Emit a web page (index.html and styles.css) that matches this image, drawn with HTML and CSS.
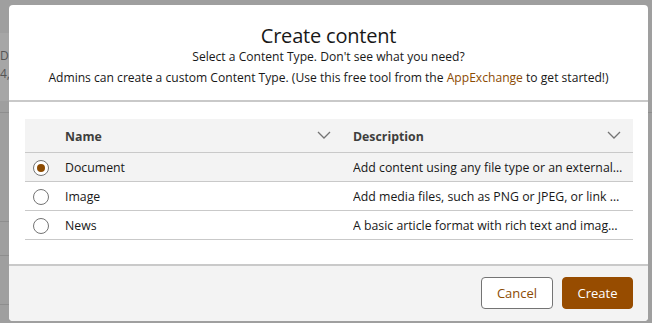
FILE: index.html
```html
<!DOCTYPE html>
<html>
<head>
<meta charset="utf-8">
<link rel="stylesheet" href="styles.css">
</head>
<body>
<div class="backdrop">
  <div class="bg-page">
    <div class="bg-band"><span>Da</span><span>4,</span></div>
    <div class="bg-line l1"></div>
    <div class="bg-line l2"></div>
    <div class="bg-line l3"></div>
    <div class="bg-line l4"></div>
    <div class="bg-line l5"></div>
  </div>
  <div class="modal">
    <header class="modal-header">
      <h1 class="title">Create content</h1>
      <p class="sub">Select a Content Type. Don't see what you need?</p>
      <p class="sub">Admins can create a custom Content Type. (Use this free tool from the <a class="link">AppExchange</a> to get started!)</p>
    </header>
    <section class="modal-body">
      <table class="grid">
        <thead>
          <tr>
            <th class="c-radio"></th>
            <th class="c-name"><div class="th-in"><span>Name</span><svg class="chev" viewBox="0 0 14 8" width="14" height="8"><path d="M1 1l6 6 6-6" fill="none" stroke="#747474" stroke-width="1.3"/></svg></div></th>
            <th class="c-desc"><div class="th-in"><span>Description</span><svg class="chev" viewBox="0 0 14 8" width="14" height="8"><path d="M1 1l6 6 6-6" fill="none" stroke="#747474" stroke-width="1.3"/></svg></div></th>
          </tr>
        </thead>
        <tbody>
          <tr class="selected">
            <td class="c-radio"><span class="radio checked"></span></td>
            <td class="c-name">Document</td>
            <td class="c-desc"><div class="trunc">Add content using any file type or an external…</div></td>
          </tr>
          <tr>
            <td class="c-radio"><span class="radio"></span></td>
            <td class="c-name">Image</td>
            <td class="c-desc"><div class="trunc">Add media files, such as PNG or JPEG, or link …</div></td>
          </tr>
          <tr>
            <td class="c-radio"><span class="radio"></span></td>
            <td class="c-name">News</td>
            <td class="c-desc"><div class="trunc">A basic article format with rich text and imag…</div></td>
          </tr>
        </tbody>
      </table>
    </section>
    <footer class="modal-footer">
      <button class="btn btn-neutral">Cancel</button>
      <button class="btn btn-brand">Create</button>
    </footer>
  </div>
</div>
</body>
</html>
```

FILE: styles.css
```css
* { box-sizing: border-box; }
html, body { margin: 0; padding: 0; }
body {
  width: 652px;
  height: 323px;
  overflow: hidden;
  font-family: "Open Sans", "Noto Sans", sans-serif;
  color: #181818;
}
.backdrop {
  position: relative;
  width: 652px;
  height: 323px;
  background: #9f9f9f;
  padding: 5px 4px 2px 9px;
}
.bg-page {
  position: absolute;
  inset: 0;
}
.bg-band {
  position: absolute;
  left: 0;
  top: 33px;
  width: 9px;
  height: 68px;
  background: #a6a6a6;
  color: #555;
  font-size: 12px;
  line-height: 18px;
  padding-top: 14px;
  overflow: hidden;
  display: flex;
  flex-direction: column;
}
.bg-line { position: absolute; height: 1px; background: #8e8e8e; }
.l1 { left: 0; width: 9px; top: 112px; }
.l2 { left: 0; width: 9px; top: 221px; }
.l3 { left: 0; width: 9px; top: 255px; }
.l4 { left: 0; width: 9px; top: 304px; }
.l5 { right: 0; width: 4px; top: 112px; }
.modal {
  position: relative;
  width: 639px;
  height: 316px;
  background: #fff;
  border-radius: 4px;
  display: flex;
  flex-direction: column;
  overflow: hidden;
}
.modal-header {
  height: 97px;
  border-bottom: 2px solid #c9c9c9;
  text-align: center;
  padding-top: 20px;
}
.title {
  margin: 0;
  font-size: 20px;
  font-weight: 400;
  line-height: 22px;
  letter-spacing: -0.2px;
}
.sub {
  margin: 0;
  font-size: 12.1px;
  line-height: 20px;
}
.sub + .sub { margin-top: 1px; }
.link { color: #8c4b02; text-decoration: none; }
.modal-body {
  flex: 1;
  padding: 17px 16px 0 16px;
}
.grid {
  width: 608px;
  border-collapse: collapse;
  table-layout: fixed;
  font-size: 12.3px;
}
.grid th, .grid td {
  padding: 2px 0 0 0;
  text-align: left;
  vertical-align: middle;
  border-bottom: 1px solid #c9c9c9;
}
.grid thead tr { height: 33px; background: #f3f3f3; }
.grid tbody tr { height: 29px; }
.grid tr.selected { background: #f3f3f3; }
.grid .c-radio { width: 40px; padding-left: 8px; }
.c-name { width: 278px; }
.c-desc { width: 290px; }
.grid th { font-weight: 700; color: #3e3e3c; }
.th-in {
  display: flex;
  align-items: center;
  justify-content: space-between;
  padding-right: 12px;
}
.chev { display: block; margin-top: -2px; }
.grid th.c-desc, .grid td.c-desc { padding-left: 10px; }
.grid td.c-desc { padding-right: 2px; }
.trunc {
  white-space: nowrap;
  overflow: hidden;
}
.radio {
  display: block;
  width: 16px;
  height: 16px;
  border: 1px solid #747474;
  border-radius: 50%;
  background: #fff;
  position: relative;
}
.radio.checked::after {
  content: "";
  position: absolute;
  left: 3px;
  top: 3px;
  width: 8px;
  height: 8px;
  border-radius: 50%;
  background: #8c4b02;
}
.modal-footer {
  height: 57px;
  background: #f3f3f3;
  border-top: 2px solid #c9c9c9;
  display: flex;
  justify-content: flex-end;
  align-items: flex-start;
  gap: 9px;
  padding: 11px 15px 0 0;
}
.btn {
  height: 32px;
  border-radius: 4px;
  font-family: inherit;
  font-size: 13px;
  padding: 0 0 1px 0;
  cursor: pointer;
}
.btn-neutral {
  width: 72px;
  background: #fff;
  border: 1px solid #747474;
  color: #8c4b02;
}
.btn-brand {
  width: 71px;
  background: #974c00;
  border: 1px solid #974c00;
  color: #fff;
}
```
